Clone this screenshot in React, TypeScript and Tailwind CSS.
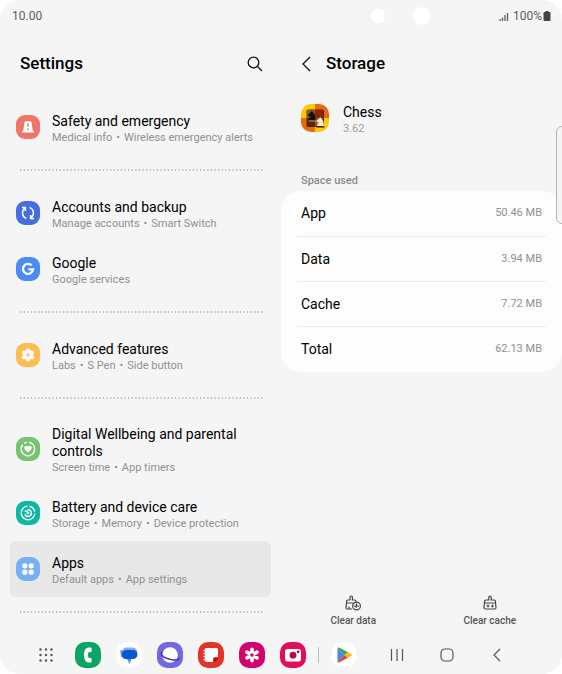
import React from 'react';

interface SettingsItem {
    title: string;
    details: string[];
    color: string;
    icon: React.ReactNode;
    active?: boolean;
}

interface DockApp {
    name: string;
    icon: React.ReactNode;
}

const groups: SettingsItem[][] = [
    [
        {
            title: 'Safety and emergency',
            details: ['Medical info', 'Wireless emergency alerts'],
            color: 'bg-[#ee7568]',
            icon: (
                <>
                    <path d="M6 17.5v-1.3h1.2L8.3 8q.2-1.7 1.8-1.7h3.8q1.6 0 1.8 1.7l1.1 8.2H18v1.3z" fill="#fff" />
                    <path d="M12 8.6v3.2M12 13.6v1.6" stroke="#ee7568" strokeWidth="1.6" />
                </>
            ),
        },
    ],
    [
        {
            title: 'Accounts and backup',
            details: ['Manage accounts', 'Smart Switch'],
            color: 'bg-[#456fe0]',
            icon: (
                <g fill="none" stroke="#fff" strokeWidth="1.5">
                    <path d="M10.4 17.4C5.6 15.8 5.6 9.8 9 6.8M6 6.6h3.4V10M13.6 6.6c4.8 1.6 4.8 7.600 1.400 10.600M18 17.400h-3.400V14" />
                </g>
            ),
        },
        {
            title: 'Google',
            details: ['Google services'],
            color: 'bg-[#4b8bf5]',
            icon: <path d="M15.6 8.400A5 5 0 1 0 17 12.400h-4.600" fill="none" stroke="#fff" strokeWidth="2.300" />,
        },
    ],
    [
        {
            title: 'Advanced features',
            details: ['Labs', 'S Pen', 'Side button'],
            color: 'bg-[#fcbc51]',
            icon: (
                <>
                    <g fill="#fff">
                        <circle cx="12" cy="12" r="4.9" />
                        <circle cx="12" cy="7.5" r="2.1" />
                        <circle cx="12" cy="16.5" r="2.1" />
                        <circle cx="8" cy="9.700" r="2.1" />
                        <circle cx="16" cy="9.700" r="2.1" />
                        <circle cx="8" cy="14.300" r="2.1" />
                        <circle cx="16" cy="14.300" r="2.1" />
                    </g>
                    <path d="M12 9.800v4.400M9.800 12h4.400" stroke="#fcbc51" strokeWidth="1.200" />
                </>
            ),
        },
    ],
    [
        {
            title: 'Digital Wellbeing and parental controls',
            details: ['Screen time', 'App timers'],
            color: 'bg-[#76c470]',
            icon: (
                <>
                    <path d="M13 5.3A6.8 6.8 0 1 1 6.6 7.8M8 6.5A6.8 6.8 0 0 1 11 5.3" fill="none" stroke="#fff" strokeWidth="1.4" />
                    <path d="M12 15.4C4.8 10.7 10 6.9 12 9.8c2-2.9 7.2.9 0 5.6z" fill="#fff" />
                </>
            ),
        },
        {
            title: 'Battery and device care',
            details: ['Storage', 'Memory', 'Device protection'],
            color: 'bg-[#0fb8a4]',
            icon: (
                <g fill="none" stroke="#fff" strokeWidth="1.3">
                    <path d="M13.5 5.3A6.8 6.8 0 0 1 18.700 10.700M18.800 12.600A6.8 6.8 0 1 1 11.500 5.200" />
                    <path d="M11.500 8.800A3.300 3.300 0 1 1 8.900 13.200M8.600 10.200l2.600 0 0 2.600" />
                    <circle cx="12" cy="12" r="0.6" fill="#fff" />
                </g>
            ),
        },
        {
            title: 'Apps',
            details: ['Default apps', 'App settings'],
            color: 'bg-[#77b0f7]',
            active: true,
            icon: (
                <g fill="#fff">
                    <circle cx="8.8" cy="8.8" r="2.6" />
                    <circle cx="15.2" cy="8.8" r="2.6" />
                    <circle cx="8.8" cy="15.2" r="2.6" />
                    <circle cx="15.2" cy="15.2" r="2.6" />
                </g>
            ),
        },
    ],
];

const usage = [
    { label: 'App', value: '50.46 MB' },
    { label: 'Data', value: '3.94 MB' },
    { label: 'Cache', value: '7.72 MB' },
    { label: 'Total', value: '62.13 MB' },
];

const dockApps: DockApp[] = [
    {
        name: 'Phone',
        icon: (
            <>
                <rect width="26" height="26" rx="10" fill="#0aa562" />
                <path d="M15.6 5.600h-2C7.400 5.600 7.400 20.400 13.600 20.400h2q1 0 1-1v-2.600q0-.9-1-.9h-1.600c-1.400-1-1.400-4.800 0-5.800h1.600q1 0 1-.9V6.600q0-1-1-1z" fill="#fff" />
            </>
        ),
    },
    {
        name: 'Messages',
        icon: (
            <>
                <rect x="0.5" y="0.5" width="25" height="25" rx="10" fill="#fff" />
                <rect x="6" y="5.5" width="15" height="9" rx="4.5" fill="#7fabf8" />
                <path d="M4.500 7.500v3.500q0 6 6.500 6l2.500 5 2-5z" fill="#4d8ff5" />
                <rect x="6" y="8" width="15.5" height="9" rx="4.5" fill="#0b57d0" />
            </>
        ),
    },
    {
        name: 'Internet',
        icon: (
            <>
                <rect width="26" height="26" rx="10" fill="#7268e4" />
                <circle cx="13" cy="13" r="7.8" fill="#fff" />
                <path d="M5.500 9.500C2.500 12 5.500 15 11 16.800s10.800 1.800 11.200-.6" fill="none" stroke="#4a3fae" strokeWidth="1.6" />
            </>
        ),
    },
    {
        name: 'Notes',
        icon: (
            <>
                <rect width="26" height="26" rx="10" fill="#e03427" />
                <path d="M7 6h11.500q1.500 0 1.500 1.500V15h-3q-2 0-2 2v3H8.500Q7 20 7 18.500z" fill="#fff" />
                <path d="M16 20v-2.500q0-1.500 1.500-1.500H20q-.5 3-4 4z" fill="#9c1c1c" />
                <path d="M5.500 8.500H8M5.500 11.500H8M5.500 14.500H8M5.500 17.500H8" stroke="#fff" strokeWidth="1.3" />
            </>
        ),
    },
    {
        name: 'Gallery',
        icon: (
            <>
                <rect width="26" height="26" rx="10" fill="#d0046c" />
                <path
                    d="M13 13V7.200M13 13v5.800M13 13l5-2.900M13 13l-5 2.900M13 13l-5-2.900M13 13l5 2.900"
                    stroke="#fff"
                    strokeWidth="3.6"
                    strokeLinecap="round"
                />
                <circle cx="13" cy="13" r="1.8" fill="#d0046c" />
            </>
        ),
    },
    {
        name: 'Camera',
        icon: (
            <>
                <rect width="26" height="26" rx="10" fill="#e20d5c" />
                <rect x="5" y="7" width="16" height="12.5" rx="2.5" fill="#fff" />
                <circle cx="13" cy="13.2" r="3.4" fill="#b9064b" />
                <circle cx="18.2" cy="9.8" r="1.4" fill="#b9064b" />
            </>
        ),
    },
];

const SettingsRow: React.FC<{ item: SettingsItem }> = ({ item }) => (
    <button
        type="button"
        className={`flex min-h-14 w-full items-center gap-3 rounded-md py-[9px] pr-4 pl-1.5 text-left ${item.active ? 'bg-[#e8e8e8]' : ''}`}
    >
        <svg viewBox="0 0 24 24" className={`size-6 shrink-0 rounded-[9px] ${item.color}`} aria-hidden="true">
            {item.icon}
        </svg>
        <span className="block pt-1">
            <span className="block text-[14px] leading-[17px] text-black">{item.title}</span>
            <span className="flex gap-1 text-[11px] leading-4 whitespace-nowrap text-[#909090]">
                {item.details.map((detail, index) => (
                    <React.Fragment key={detail}>
                        {index > 0 && <span>•</span>}
                        <span>{detail}</span>
                    </React.Fragment>
                ))}
            </span>
        </span>
    </button>
);

const Divider: React.FC = () => (
    <div className="mr-2 ml-2.5 flex h-[30px] items-center">
        <svg className="h-0.5 w-full" aria-hidden="true">
            <line x1="0" y1="1" x2="100%" y2="1" stroke="#aaa" strokeWidth="1.3" strokeDasharray="1.3 2.3" />
        </svg>
    </div>
);

const StatusBar: React.FC = () => (
    <header className="flex h-8 items-center justify-between pr-[11px] pl-3 text-[12px] text-[#5c5c5c]">
        <span>10.00</span>
        <span className="flex items-center gap-1">
            <svg viewBox="0 0 10 9" className="h-[9px] w-2.5" aria-hidden="true">
                <path d="M1 7v2M3.500 5.500V9M6 3v6M8.500 1v8" stroke="#5c5c5c" strokeWidth="1.3" />
            </svg>
            <span className="flex items-center gap-px">
                100%
                <svg viewBox="0 0 8 10" className="h-2.5 w-2" aria-hidden="true">
                    <path d="M2.500 0h3v1H6.500q1 0 1 1v7q0 1-1 1h-5q-1 0-1-1V2q0-1 1-1h1z" fill="#454545" />
                </svg>
            </span>
        </span>
    </header>
);

const SettingsPane: React.FC = () => (
    <section className="px-2.5">
        <div className="mb-[3px] flex h-16 items-center justify-between pr-2 pl-2.5">
            <h1 className="text-[17px] font-medium text-black">Settings</h1>
            <button type="button" aria-label="Search">
                <svg viewBox="0 0 16 16" className="size-4" fill="none" stroke="#111" strokeWidth="1.3" aria-hidden="true">
                    <circle cx="6.5" cy="6.5" r="5.3" />
                    <path d="m10.500 10.500 4.500 4.500" />
                </svg>
            </button>
        </div>
        {groups.map((group) => (
            <div key={group[0].title}>
                {group.map((item) => (
                    <SettingsRow key={item.title} item={item} />
                ))}
                <Divider />
            </div>
        ))}
    </section>
);

const ChessIcon: React.FC = () => (
    <svg viewBox="0 0 28 28" className="size-7 rounded-[10px]" aria-hidden="true">
        <path d="M0 0h14v14H0zM14 14h14v14H14z" fill="#fccb08" />
        <path d="M14 0h14v14H14zM0 14h14v14H0z" fill="#e56a10" />
        <rect x="5.5" y="5.5" width="17.5" height="17.5" rx="1.5" fill="#5a2408" />
        <path d="M6 6h8v8H6zM14 14h8v8h-8z" fill="#8f5720" />
        <path d="M14 6h8v8h-8z" fill="#8a2508" />
        <path d="M7.500 16q.5-2.500 2.500-4l-2.500.5-.5-1.500 3-3.200L11 7l1 1.500q2.500 2 2.500 7.500z" fill="#111" />
        <path d="M7.500 17h7" stroke="#a5a09a" />
        <path d="M16 22q.3-2.500 2.200-4l-2.400.3-.3-1.500 3-2.700.7-1 1 1.500q2.600 1.900 2.800 7.400z" fill="#f7ecd2" />
        <path d="M15.500 23h8" stroke="#3a1905" strokeWidth="1.2" />
    </svg>
);

const StoragePane: React.FC = () => (
    <section className="flex flex-col">
        <div className="mb-[3px] flex h-16 items-center gap-3.5 pl-5">
            <button type="button" aria-label="Back">
                <svg viewBox="0 0 11 16" className="h-4 w-[11px]" fill="none" stroke="#111" strokeWidth="1.3" aria-hidden="true">
                    <path d="M9 1 2 8l7 7" />
                </svg>
            </button>
            <h2 className="text-[17px] font-medium text-black">Storage</h2>
        </div>
        <div className="flex h-[38px] items-center gap-3.5 pl-5">
            <ChessIcon />
            <div className="pt-1">
                <p className="text-[14px] leading-[17px] text-black">Chess</p>
                <p className="text-[11px] leading-4 text-[#a0a0a0]">3.62</p>
            </div>
        </div>
        <h3 className="mt-[35px] mb-px pl-5 text-[11px] leading-[18px] font-medium text-[#8c8c8c]">Space used</h3>
        <dl className="rounded-[20px] bg-[#fdfdfd] px-4">
            {usage.map((row) => (
                <div
                    key={row.label}
                    className="flex h-[45px] items-center justify-between border-b border-[#ebebeb] px-1 first:h-[46px] last:border-b-0"
                >
                    <dt className="text-[14px] text-black">{row.label}</dt>
                    <dd className="text-[11px] text-[#909090]">{row.value}</dd>
                </div>
            ))}
        </dl>
        <div className="mt-auto grid grid-cols-2 px-1 text-[10px] leading-3 font-medium text-[#555]">
            <button type="button" className="flex flex-col items-center gap-1">
                <svg viewBox="0 0 16 16" className="size-4" fill="none" stroke="#444" strokeWidth="1.2" aria-hidden="true">
                    <path d="M5 5V2.200Q5 1 6.200 1t1.200 1.200V5h2.100q1.500 0 1.500 1.500M5 5H3Q1.500 5 1.500 6.500V8H8M1.500 8 1 12.800Q1 14 2 14h5M4 11.500V14" />
                    <circle cx="11.5" cy="11" r="3.9" />
                    <path d="M11.500 8.500V11H14M9.500 10.500l2 2.200" />
                </svg>
                Clear data
            </button>
            <button type="button" className="flex flex-col items-center gap-1">
                <svg viewBox="0 0 16 16" className="size-4" fill="none" stroke="#444" strokeWidth="1.2" aria-hidden="true">
                    <path d="M6.800 5V2.200Q6.800 1 8 1t1.200 1.200V5H12q1.500 0 1.500 1.500V8h-11V6.500Q2.500 5 4 5zM2.500 8 2 12.500Q2 14 3.500 14h9q1.500 0 1.500-1.500L13.500 8" />
                    <path d="M6 9.500v3M4.500 11h3M10.500 9.500v3M9 11h3" strokeWidth="1" />
                </svg>
                Clear cache
            </button>
        </div>
    </section>
);

const Dock: React.FC = () => (
    <nav className="flex h-[47px] items-center pt-[9px] pr-[58px] pl-[39px]">
        <button type="button" aria-label="All apps">
            <svg viewBox="0 0 14 14" className="size-3.5" fill="#555" aria-hidden="true">
                {[1.5, 7, 12.5].map((y) => [1.5, 7, 12.5].map((x) => <circle key={`${x}-${y}`} cx={x} cy={y} r="1.2" />))}
            </svg>
        </button>
        <div className="ml-[22px] flex items-center gap-[15px]">
            {dockApps.map((app) => (
                <button key={app.name} type="button" aria-label={app.name}>
                    <svg viewBox="0 0 26 26" className="size-[26px]" aria-hidden="true">
                        {app.icon}
                    </svg>
                </button>
            ))}
        </div>
        <div className="ml-3 flex items-center gap-3">
            <span className="h-4 w-px bg-[#bbb]" />
            <button type="button" aria-label="Play Store">
                <svg viewBox="0 0 26 26" className="size-[26px]" aria-hidden="true">
                    <rect x="0.5" y="0.5" width="25" height="25" rx="10" fill="#fff" />
                    <path d="M6.500 6v14l7-7z" fill="#4285f4" />
                    <path d="M6.500 6q.5-1 2-.3l8.500 4.500-3.500 2.800z" fill="#34a853" />
                    <path d="M6.500 20q.5 1 2 .3l8.500-4.500-3.500-2.800z" fill="#ea4335" />
                    <path d="m17 10.200 3.500 2q1 .8 0 1.600l-3.500 2-3.500-2.800z" fill="#fbbc04" />
                </svg>
            </button>
        </div>
        <div className="ml-auto flex items-center gap-9">
            <button type="button" aria-label="Recent apps">
                <svg viewBox="0 0 14 14" className="size-3.5" stroke="#555" strokeWidth="1.2" aria-hidden="true">
                    <path d="M1.500 1v12M7 1v12M12.500 1v12" />
                </svg>
            </button>
            <button type="button" aria-label="Home">
                <svg viewBox="0 0 14 14" className="size-3.5" fill="none" stroke="#555" strokeWidth="1.2" aria-hidden="true">
                    <rect x="1" y="1" width="12" height="12" rx="4" />
                </svg>
            </button>
            <button type="button" aria-label="Back">
                <svg viewBox="0 0 14 14" className="size-3.5" fill="none" stroke="#555" strokeWidth="1.2" aria-hidden="true">
                    <path d="M10 1 4 7l6 6" />
                </svg>
            </button>
        </div>
    </nav>
);

const App: React.FC = () => (
    <div className="min-h-screen bg-white font-['Roboto',sans-serif]">
        <div className="relative flex min-h-screen flex-col overflow-hidden rounded-[20px] bg-[#f5f5f5]">
            <StatusBar />
            <span className="absolute top-[9px] left-[66%] size-3.5 rounded-full bg-white" />
            <span className="absolute top-[7px] left-[73.5%] size-[18px] rounded-full bg-white" />
            <main className="grid flex-1 grid-cols-2">
                <SettingsPane />
                <StoragePane />
            </main>
            <Dock />
            <span className="absolute top-[126px] -right-2 h-[98px] w-3.5 rounded-md border border-[#b4b4b4] bg-[#f5f5f5]" />
        </div>
    </div>
);

export default App;
